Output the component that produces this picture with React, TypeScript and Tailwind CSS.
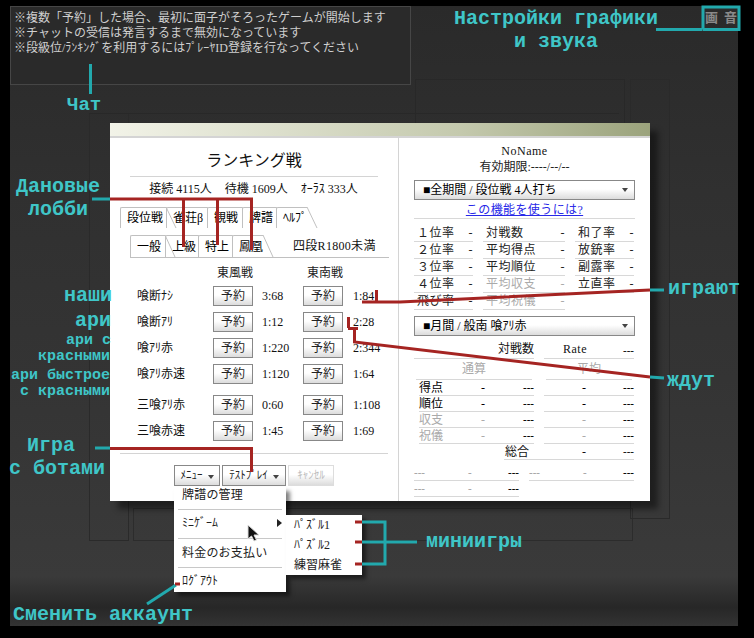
import React from "react";

const btnBg = "bg-[linear-gradient(#ffffff_45%,#dcdcdc)]";

const games = [
  { name: "喰断ﾅｼ", a: "3:68", b: "1:84" },
  { name: "喰断ｱﾘ", a: "1:12", b: "2:28" },
  { name: "喰ｱﾘ赤", a: "1:220", b: "2:344" },
  { name: "喰ｱﾘ赤速", a: "1:120", b: "1:64" },
  { name: "三喰ｱﾘ赤", a: "0:60", b: "1:108", gap: true },
  { name: "三喰赤速", a: "1:45", b: "1:69" },
];

const stats = [
  ["１位率", "対戦数", "和了率"],
  ["２位率", "平均得点", "放銃率"],
  ["３位率", "平均順位", "副露率"],
  ["４位率", "平均収支", "立直率"],
  ["飛び率", "平均祝儀", ""],
];

const Slant = () => (
  <svg className="absolute left-full top-[-1px] h-[calc(100%+1px)] w-[10px] overflow-visible" viewBox="0 0 10 22" preserveAspectRatio="none">
    <path d="M0 0 L10 22" stroke="#c0c0c0" strokeWidth="1" fill="none" />
  </svg>
);

const Tab = ({ label, w, active, h }: { label: string; w: string; active?: boolean; h: string }) => (
  <div className={`relative ${w} ${h} ${active ? "z-10" : ""} flex shrink-0 items-center whitespace-nowrap rounded-tl-[2px] border-l border-t border-[#c0c0c0] bg-white pl-[6px] text-[12px]`}>
    {label}
    <Slant />
  </div>
);

const ReserveBtn = () => (
  <button className={`h-[20px] w-[40px] border border-[#888] ${btnBg} text-[12px] text-[#222]`}>予約</button>
);

const Caret = () => <span className="ml-[5px] inline-block border-x-[3.5px] border-t-[4px] border-x-transparent border-t-[#444] align-middle" />;

const Select = ({ label }: { label: string }) => (
  <div className={`flex h-[20px] w-[221px] items-center justify-between border border-[#888] ${btnBg} pl-[8px] pr-[6px] text-[12px] text-black`}>
    <span>{label}</span>
    <span className="inline-block border-x-[3px] border-t-[4px] border-x-transparent border-t-[#444]" />
  </div>
);

const StatCell = ({ label }: { label: string }) => {
  const muted = label === "平均収支" || label === "平均祝儀";
  if (!label) return <div />;
  return (
    <div className={`flex h-[17px] items-center justify-between border-b border-[#d8d8d8] pl-[3px] text-[12px] tracking-[0.5px] ${muted ? "text-[#aaa]" : "text-[#222]"}`}>
      <span>{label}</span>
      <span>-</span>
    </div>
  );
};

const ScoreRow = ({ label, muted }: { label?: string; muted?: boolean }) => (
  <div className="flex h-[16px] items-center border-b border-[#d8d8d8] text-[12px]">
    <span className={`${label ? "w-[62px]" : "w-[38px]"} shrink-0 ${muted ? "text-[#aaa]" : "text-black"}`}>{label}</span>
    <span className={muted ? "text-[#aaa]" : "text-black"}>-</span>
    <span className="ml-auto text-[11px] font-bold leading-none text-black">---</span>
  </div>
);

const FootRow = () => (
  <div className="flex h-[16px] items-center border-b border-[#d8d8d8] text-[11px]">
    <span className="w-[54px] text-[#999]">---</span>
    <span className="text-[#999]">-</span>
    <span className="ml-auto font-bold leading-none text-black">---</span>
  </div>
);

const MenuSep = () => <div className="mx-[4px] border-t border-[#c8c8c8]" />;

const labelCls = "absolute whitespace-pre text-center font-bold leading-none text-[#3fc6c8] [font-family:'Liberation_Mono',monospace]";

const App = () => {
  return (
    <div className="relative h-[638px] w-[754px] overflow-hidden bg-black pl-[10px] pt-[6px] [font-family:'Liberation_Serif','Noto_Sans_CJK_JP',serif] text-black">
      <div className="relative h-[620px] w-[728px] bg-[linear-gradient(#2a2a2a,#303030_30%,#343434_60%,#3a3a3a_92%,#272727_97%,#333333)]">
        {/* darker frames in the table texture */}
        <div className="absolute left-[79px] top-[107px] h-[428px] w-[40px] border border-[#2a2a2a]" />
        <div className="absolute left-[123px] top-[502px] h-[33px] w-[500px] border border-[#2c2c2c]" />
        <div className="absolute left-[405px] top-[73px] h-[60px] w-[210px] border border-[#282828]" />
        <div className="absolute left-[620px] top-[73px] h-[440px] w-[40px] border border-[#2a2a2a]" />
        <div className="absolute left-[79px] top-[107px] h-[1px] w-[530px] bg-[#282828]" />

        {/* chat log */}
        <div className="relative h-[79px] w-[401px] border border-[#464646] bg-[#2a2a2a] pl-[3px] pt-[4px] text-[12px] leading-[15px] text-[#cfcfcf]">
          <p className="whitespace-nowrap">※複数「予約」した場合、最初に面子がそろったゲームが開始します</p>
          <p className="whitespace-nowrap">※チャットの受信は発言するまで無効になっています</p>
          <p className="whitespace-nowrap">※段級位/ﾗﾝｷﾝｸﾞを利用するにはﾌﾟﾚｰﾔID登録を行なってください</p>
        </div>

        {/* lobby window */}
        <div className="relative ml-[100px] mt-[38px] h-[378px] w-[540px] bg-white shadow-[8px_8px_6px_rgba(0,0,0,0.45)]">
          <div className="box-content h-[13px] border-b-2 border-[#d4d4d4] bg-[linear-gradient(90deg,#f2f3e8,#c4c9ad_65%,#9ba37c)]" />
          <div className="flex h-[363px]">
            {/* left column */}
            <div className="w-[290px] border-r border-[#d4d4d4]">
              <div className="mx-[20px] mt-[11px] flex h-[28px] items-center justify-center border-b border-[#d4d4d4] pb-[4px] text-[16px] text-[#111]">
                ランキング戦
              </div>
              <div className="flex h-[24px] items-center justify-center gap-[13px] pr-[1px] text-[12px] text-[#111]">
                <span>接続 4115人</span>
                <span>待機 1609人</span>
                <span>ｵｰﾗｽ 333人</span>
              </div>
              <div className="ml-[10px] mt-[6px] flex">
                <Tab label="段位戦" w="w-[46px]" h="h-[21px]" active />
                <Tab label="雀荘β" w="w-[41px]" h="h-[21px]" />
                <Tab label="観戦" w="w-[35px]" h="h-[21px]" />
                <Tab label="牌譜" w="w-[34px]" h="h-[21px]" />
                <Tab label="ﾍﾙﾌﾟ" w="w-[31px]" h="h-[21px]" />
              </div>
              <div className="ml-[20px] mr-[9px] mt-[7px] flex border-b border-[#c0c0c0]">
                <Tab label="一般" w="w-[35px]" h="h-[22px]" active />
                <Tab label="上級" w="w-[33px]" h="h-[22px]" />
                <Tab label="特上" w="w-[34px]" h="h-[22px]" />
                <Tab label="鳳凰" w="w-[31px]" h="h-[22px]" />
                <span className="ml-[30px] self-center text-[12px] tracking-[0.3px] text-[#111]">四段R1800未満</span>
              </div>
              <div className="mt-[6px] flex h-[18px] items-center pl-[107px] text-[12px] text-[#222]">
                <span className="w-[90px]">東風戦</span>
                <span>東南戦</span>
              </div>
              <div className="mt-[4px] pl-[27px]">
                {games.map((g) => (
                  <div key={g.name} className={`flex h-[20px] items-center text-[12px] text-[#111] ${g.gap ? "mt-[11px]" : "mt-[6px] first:mt-0"}`}>
                    <span className="w-[76px]">{g.name}</span>
                    <ReserveBtn />
                    <span className="w-[50px] pl-[9px]">{g.a}</span>
                    <ReserveBtn />
                    <span className="pl-[10px]">{g.b}</span>
                  </div>
                ))}
              </div>
              <div className="mx-[10px] mt-[12px] border-t border-[#d4d4d4]" />
              <div className="relative ml-[64px] mt-[11px] flex gap-[2px] text-[11px] text-[#222]">
                <button className={`h-[21px] w-[46px] whitespace-nowrap border border-[#888] ${btnBg}`}>
                  ﾒﾆｭｰ
                  <Caret />
                </button>
                <button className={`h-[21px] w-[64px] whitespace-nowrap border border-[#888] ${btnBg}`}>
                  ﾃｽﾄﾌﾟﾚｲ
                  <Caret />
                </button>
                <button className={`h-[21px] w-[46px] whitespace-nowrap border border-[#ddd] ${btnBg} text-[#bbb]`}>ｷｬﾝｾﾙ</button>

                {/* popup menu */}
                <div className="absolute left-0 top-[22px] z-20 h-[105px] w-[112px] bg-white text-[12px] text-[#222] shadow-[4px_4px_4px_rgba(0,0,0,0.5)]">
                  <div className="flex h-[22px] items-center pb-[6px] pl-[8px] tracking-[0.2px]">牌譜の管理</div>
                  <MenuSep />
                  <div className="flex h-[28px] items-center justify-between pb-[2px] pl-[8px] pr-[4px]">
                    <span>ﾐﾆｹﾞｰﾑ</span>
                    <span className="inline-block border-y-[4px] border-l-[5px] border-y-transparent border-l-[#222]" />
                  </div>
                  <MenuSep />
                  <div className="flex h-[28px] items-center pl-[8px] tracking-[0.2px]">料金のお支払い</div>
                  <MenuSep />
                  <div className="flex h-[24px] items-center pl-[8px] pt-[2px]">ﾛｸﾞｱｳﾄ</div>

                  <div className="absolute left-[112px] top-[28px] h-[60px] w-[76px] bg-white pl-[8px] shadow-[4px_4px_4px_rgba(0,0,0,0.5)]">
                    <div className="flex h-[20px] items-center">ﾊﾟｽﾞﾙ1</div>
                    <div className="flex h-[20px] items-center">ﾊﾟｽﾞﾙ2</div>
                    <div className="flex h-[20px] items-center">練習麻雀</div>
                  </div>
                </div>
              </div>
            </div>

            {/* right column */}
            <div className="flex-1 px-[15px]">
              <div className="mt-[5px] h-[16px] text-center text-[12px] leading-[16px] tracking-[0.5px] text-[#111]">NoName</div>
              <div className="h-[16px] text-center text-[12px] leading-[16px] text-[#222]">有効期限:----/--/--</div>
              <div className="mt-[5px]">
                <Select label="■全期間 / 段位戦 4人打ち" />
              </div>
              <div className="mt-[3px] h-[16px] border-b border-[#d8d8d8] text-center text-[12px] leading-[15px] tracking-[0.4px]">
                <span className="text-[#2828e8] underline">この機能を使うには?</span>
              </div>
              <div className="mt-[6px] grid grid-cols-[59px_82px_59px] gap-x-[10px]">
                {stats.flat().map((s, i) => (
                  <StatCell key={i} label={s} />
                ))}
              </div>
              <div className="mt-[6px]">
                <Select label="■月間 / 般南 喰ｱﾘ赤" />
              </div>
              <div className="mt-[6px] flex h-[17px] text-[12px]">
                <div className="flex w-[120px] items-end justify-end border-b border-[#d8d8d8] text-[#111]">対戦数</div>
                <div className="ml-[10px] flex w-[90px] items-end justify-between border-b border-[#d8d8d8] pl-[19px] text-[#111]">
                  <span className="tracking-[0.5px]">Rate</span>
                  <span className="text-[11px] font-bold">---</span>
                </div>
              </div>
              <div className="flex h-[21px] text-[12px] text-[#aaa]">
                <div className="mx-[2px] flex w-[116px] items-end justify-center border-b border-[#d8d8d8] pb-[1px]">通算</div>
                <div className="mx-[2px] ml-[12px] flex w-[86px] items-end justify-center border-b border-[#d8d8d8] pb-[1px]">平均</div>
              </div>
              <div className="grid grid-cols-[120px_90px] gap-x-[10px]">
                <div className="pl-[5px]">
                  <ScoreRow label="得点" />
                  <ScoreRow label="順位" />
                  <ScoreRow label="収支" muted />
                  <ScoreRow label="祝儀" muted />
                </div>
                <div>
                  <ScoreRow />
                  <ScoreRow />
                  <ScoreRow muted />
                  <ScoreRow muted />
                </div>
              </div>
              <div className="ml-[90px] flex h-[16px] w-[130px] items-center border-b border-[#d8d8d8] text-[12px] text-[#111]">
                <span className="w-[78px] pl-[1px]">総合</span>
                <span>-</span>
                <span className="ml-auto text-[11px] font-bold leading-none">---</span>
              </div>
              <div className="mt-[5px] flex gap-[10px]">
                <div className="w-[105px]">
                  <FootRow />
                  <FootRow />
                </div>
                <div className="w-[105px]">
                  <FootRow />
                </div>
              </div>
            </div>
          </div>
        </div>
      </div>

      {/* settings button */}
      <div className="absolute left-[705px] top-[9px] flex gap-[6px] text-[13px] font-bold leading-[18px] text-[#8a8a8a]">
        <span>画</span>
        <span>音</span>
      </div>

      {/* annotation lines drawn on top of the game */}
      <svg className="pointer-events-none absolute left-0 top-0 z-30" width="754" height="638" fill="none" strokeWidth="3">
        <g stroke="#22a9ad">
          <path d="M656 29.5 H702.5 M703 29.5 V7 H739 V29.5 H703" />
          <path d="M90.5 64 V94" />
          <path d="M92 199 H110" />
          <path d="M95 448 H110" />
          <path d="M650 290 H664" />
          <path d="M650 377 L664 378" />
          <path d="M362 522 H385 V564 H362 M362 542 H417" />
          <path d="M147 604 L176 585" />
        </g>
        <g stroke="#a52422">
          <path d="M110 199 H251.5 V250 M183.5 199 V247 M217.5 199 V245" />
          <path d="M110 448.5 H251.5 V472" />
          <path d="M650 290 L400 302 H362 M376.5 290 V302" />
          <path d="M348.5 317 V328 M348 328.5 H358 M354.5 328 V342 L650 377" />
          <path d="M355 522 H362 M355 542 H362 M355 564 H362" />
          <path d="M175 584 H180" />
        </g>
        {/* mouse pointer */}
        <path d="M248 525 V539 L251.5 536 L254 541 L256.5 540 L254 535 H259 Z" fill="#111" stroke="#ddd" strokeWidth="1" />
      </svg>

      {/* annotation labels */}
      <div className={`${labelCls} left-[454px] top-[9px] text-[20px]`}>Настройки графики</div>
      <div className={`${labelCls} left-[514px] top-[32px] text-[20px]`}>и звука</div>
      <div className={`${labelCls} left-[67px] top-[96px] text-[19px]`}>Чат</div>
      <div className={`${labelCls} left-[16px] top-[177px] text-[20px]`}>Дановые</div>
      <div className={`${labelCls} left-[28px] top-[200px] text-[20px]`}>лобби</div>
      <div className={`${labelCls} left-[64px] top-[286px] text-[20px]`}>наши</div>
      <div className={`${labelCls} left-[75px] top-[311px] text-[20px]`}>ари</div>
      <div className={`${labelCls} left-[66px] top-[333px] text-[15px]`}>ари с</div>
      <div className={`${labelCls} left-[38px] top-[349px] text-[15px]`}>красными</div>
      <div className={`${labelCls} left-[11px] top-[368px] text-[15px]`}>ари быстрое</div>
      <div className={`${labelCls} left-[20px] top-[384px] text-[15px]`}>с красными</div>
      <div className={`${labelCls} left-[27px] top-[436px] text-[20px]`}>Игра</div>
      <div className={`${labelCls} left-[9px] top-[459px] text-[20px]`}>с ботами</div>
      <div className={`${labelCls} left-[13px] top-[605px] text-[20px]`}>Сменить аккаунт</div>
      <div className={`${labelCls} left-[426px] top-[532px] text-[20px]`}>миниигры</div>
      <div className={`${labelCls} left-[668px] top-[279px] text-[20px]`}>играют</div>
      <div className={`${labelCls} left-[667px] top-[371px] text-[20px]`}>ждут</div>
    </div>
  );
};

export default App;
